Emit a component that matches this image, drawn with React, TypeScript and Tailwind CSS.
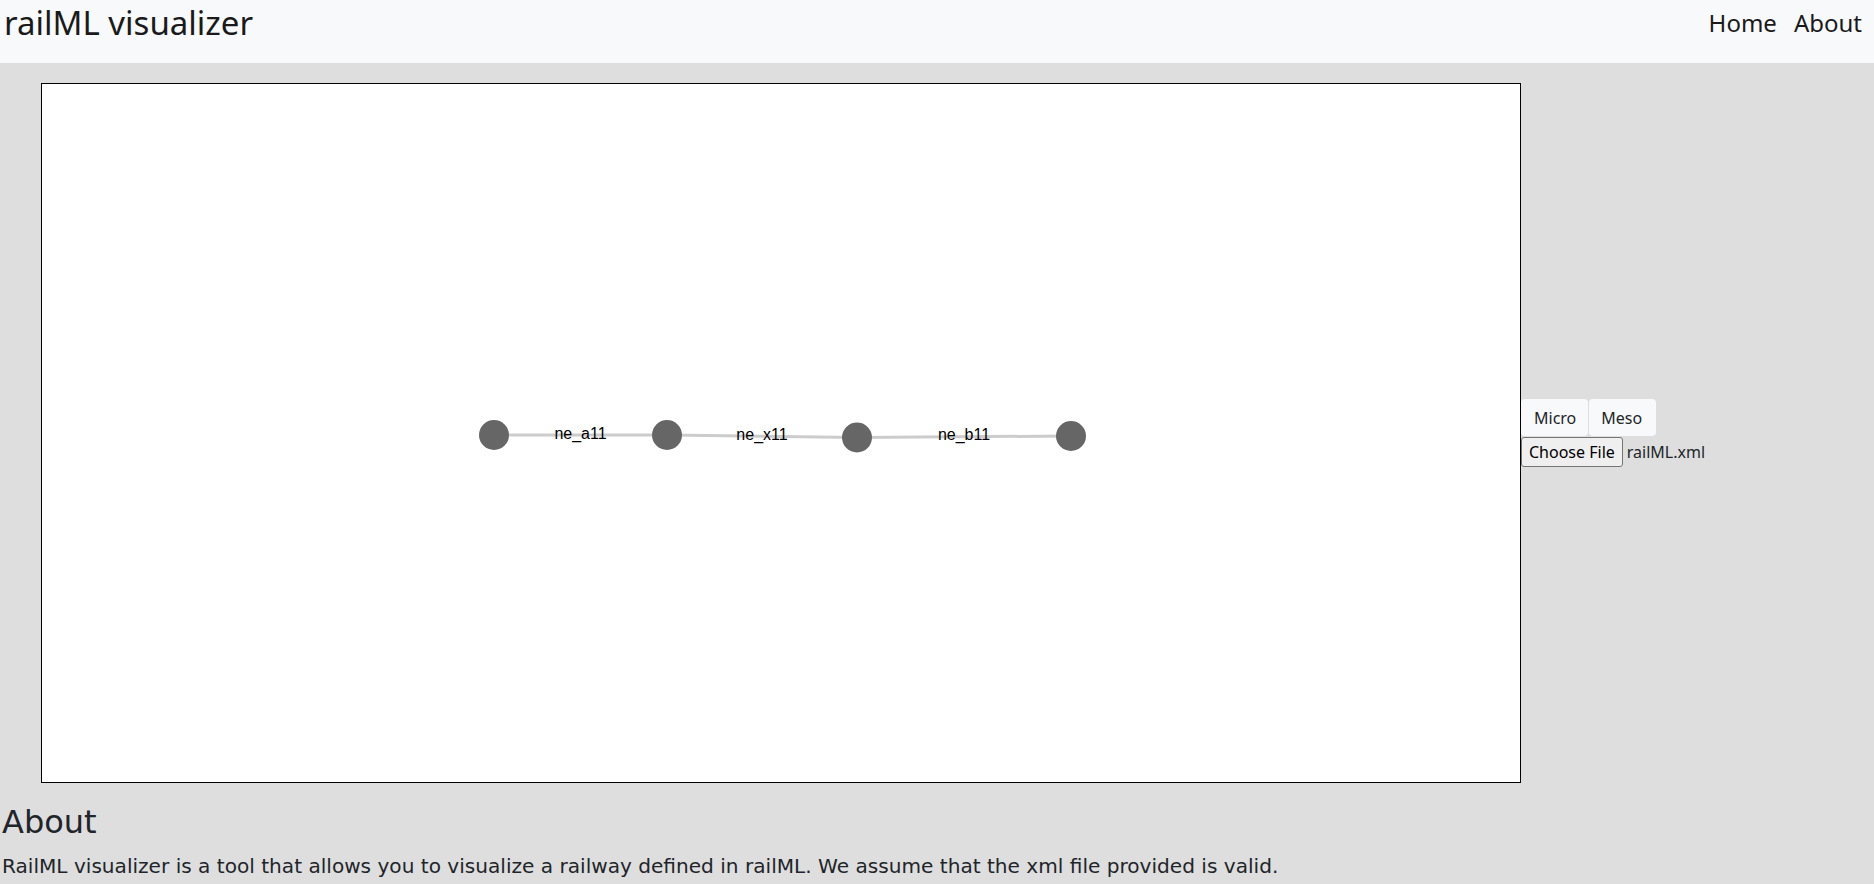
import React, { useState } from "react";

interface GraphNode {
  id: string;
  x: number;
  y: number;
}

interface GraphEdge {
  id: string;
  from: number;
  to: number;
}

// coordinates inside the drawing box (inner size 1478 x 698)
const nodes: GraphNode[] = [
  { id: "n1", x: 452, y: 351 },
  { id: "n2", x: 625, y: 351 },
  { id: "n3", x: 815, y: 353.5 },
  { id: "n4", x: 1029, y: 352 },
];

const edges: GraphEdge[] = [
  { id: "ne_a11", from: 0, to: 1 },
  { id: "ne_x11", from: 1, to: 2 },
  { id: "ne_b11", from: 2, to: 3 },
];

const Graph: React.FC = () => {
  return (
    <svg width="1478" height="698" viewBox="0 0 1478 698" className="block">
      {edges.map((e) => {
        const a = nodes[e.from];
        const b = nodes[e.to];
        return (
          <line
            key={e.id}
            x1={a.x}
            y1={a.y}
            x2={b.x}
            y2={b.y}
            stroke="#cccccc"
            strokeWidth={3}
          />
        );
      })}
      {nodes.map((n) => (
        <circle key={n.id} cx={n.x} cy={n.y} r={15} fill="#666666" />
      ))}
      {edges.map((e) => {
        const a = nodes[e.from];
        const b = nodes[e.to];
        return (
          <text
            key={e.id + "-label"}
            x={(a.x + b.x) / 2}
            y={(a.y + b.y) / 2 - 2}
            textAnchor="middle"
            dominantBaseline="central"
            fontFamily="'Liberation Sans', Arial, sans-serif"
            fontSize={16}
            fill="#000000"
          >
            {e.id}
          </text>
        );
      })}
    </svg>
  );
};

const App: React.FC = () => {
  const [mode, setMode] = useState<"micro" | "meso">("micro");

  return (
    <div className="min-h-[884px] bg-[#dedede] text-[#212529] font-['Noto_Sans',sans-serif]">
      <nav className="h-[63px] bg-[#f8f9fa] flex items-start justify-between">
        <a href="#" className="pl-[4px] text-[33px] leading-[46px] text-[#1a1a1a]">
          railML visualizer
        </a>
        <div className="flex gap-[17px] pr-[12px] pt-[5px] text-[24px] leading-[36px] text-[#1a1a1a]">
          <a href="#">Home</a>
          <a href="#">About</a>
        </div>
      </nav>

      <div className="flex items-center pl-[41px] pt-[20px]">
        <div className="w-[1480px] h-[700px] border border-black bg-white shrink-0">
          <Graph />
        </div>
        <div className="flex flex-col items-start">
          <div className="flex gap-px">
            <button
              onClick={() => setMode("micro")}
              className={`pl-[13px] pr-3 h-[37px] rounded text-[16px] ${
                mode === "micro" ? "bg-[#f8f9fa]" : "bg-[#f8f9fa]"
              }`}
            >
              Micro
            </button>
            <button
              onClick={() => setMode("meso")}
              className="pl-3 pr-[14px] h-[37px] rounded text-[16px] bg-[#f8f9fa]"
            >
              Meso
            </button>
          </div>
          <div className="flex items-center gap-1 mt-px">
            <span className="h-[30px] px-[7px] flex items-center border border-[#767676] rounded-[3px] bg-[#efefef] text-[16px] text-black">
              Choose File
            </span>
            <span className="text-[16px] text-[#212529]">railML.xml</span>
          </div>
        </div>
      </div>

      <div className="font-['DejaVu_Sans',sans-serif] pl-[2px]">
        <h2 className="mt-[20px] mb-[10px] text-[32px] leading-[1.2]">About</h2>
        <p className="text-[20.1px] leading-[1.5]">
          RailML visualizer is a tool that allows you to visualize a railway defined in railML. We
          assume that the xml file provided is valid.
        </p>
      </div>
    </div>
  );
};

export default App;
